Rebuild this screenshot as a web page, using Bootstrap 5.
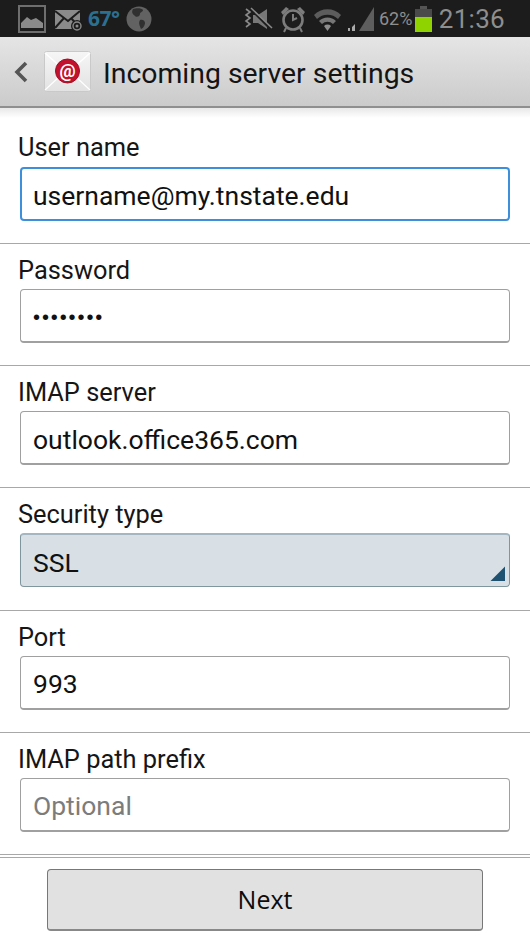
<!DOCTYPE html>
<html lang="en">
<head>
    <meta charset="utf-8" />
    <meta name="viewport" content="width=device-width, initial-scale=1" />
    <title>Incoming server settings</title>
    <link href="https://cdn.jsdelivr.net/npm/bootstrap@5.3.0/dist/css/bootstrap.min.css" rel="stylesheet">
    <style>
        body {
            background-color: #fff;
            font-family: Roboto, "Liberation Sans", sans-serif;
            color: #111;
            width: 530px;
            height: 942px;
            overflow: hidden;
        }

        /* Status bar */
        .status-bar {
            height: 37px;
            background-color: #1c1c1c;
            padding-left: 18px;
            padding-right: 25px;
        }
        .status-bar svg { display: block; flex: none; }
        .temp-text {
            color: #2b7091;
            font-size: 21px;
            font-weight: 700;
            letter-spacing: -0.5px;
            font-family: "Open Sans", sans-serif;
            line-height: 1;
            width: 30px;
            white-space: nowrap;
            margin-left: 4px;
        }
        .batt-text { color: #8e8e8e; font-size: 18px; line-height: 1; margin-left: 4px; width: 32px; }
        .clock-text { color: #8e8e8e; font-size: 26px; line-height: 1; letter-spacing: .3px; }
        .gap-mail { margin-left: 8px; }
        .gap-globe { margin-left: 8px; }
        .gap-mute { margin-left: 91px; }
        .gap-alarm { margin-left: 6px; }
        .gap-wifi { margin-left: 7px; }
        .gap-signal { margin-left: 5px; }
        .gap-batt { margin-left: 4px; }

        /* Action bar */
        .action-bar {
            height: 71px;
            background: linear-gradient(#e5e5e5, #cbcbcb);
            border-bottom: 2px solid #8f8f8f;
            padding-left: 13px;
        }
        .action-logo { margin-left: 16px; flex: none; }
        .action-title { font-size: 28.4px; line-height: 1; margin-left: 12px; margin-top: 6px; color: #141414; }
        .bar-shadow { height: 10px; background: linear-gradient(#e8e8e8, #fff); }

        /* Form rows */
        .field-list { margin-top: -10px; }
        .field-row {
            height: 122.2px;
            padding: 14px 20px 0 18px;
            border-bottom: 1px solid #a8a8a8;
        }
        .field-row.first-row { height: 136px; padding-top: 27px; }
        .field-label { font-size: 25.4px; line-height: 24px; height: 24px; margin-bottom: 7px; display: block; color: #161616; }
        .first-row .field-label { margin-bottom: 8px; }
        .phone-input.form-control {
            height: 54px;
            margin-left: 2px;
            width: 490px;
            border: 1px solid #a0a0a0;
            border-bottom-width: 2px;
            border-radius: 4px;
            font-size: 26.5px;
            padding: 3px 12px 0;
            color: #111;
            box-shadow: none;
            font-family: inherit;
        }
        .phone-input.form-control::placeholder { color: #7c7c7c; opacity: 1; }
        .phone-input.is-focus { border: 2px solid #3d8fdc; padding-left: 11px; }
        .dots-input.form-control { font-size: 20px; letter-spacing: 1.9px; font-family: "Liberation Sans", sans-serif; }
        .spinner-box {
            height: 54px;
            width: 490px;
            margin-left: 2px;
            background-color: #d8e0e6;
            border: 1px solid #7f969f;
            border-top: 2px solid #a3b6c2;
            border-radius: 4px;
            font-size: 26.5px;
            padding: 3px 12px 0;
            position: relative;
        }
        .spinner-corner {
            position: absolute;
            right: 4px;
            bottom: 5px;
            width: 15px;
            height: 15px;
            background-color: #1f5270;
            clip-path: polygon(100% 0, 100% 100%, 0 100%);
        }

        /* Bottom button */
        .bottom-bar { border-top: 1px solid #a8a8a8; margin-top: 2px; padding-top: 11px; }
        .next-btn.btn {
            width: 436px;
            height: 62px;
            background-color: #e1e1e1;
            border: 1px solid #777;
            border-bottom: 2px solid #888;
            border-radius: 4px;
            font-size: 25px;
            color: #0c0c0c;
            padding: 0;
            font-family: "Open Sans", sans-serif;
        }
    </style>
</head>
<body>
    <!-- Status bar -->
    <div class="status-bar d-flex align-items-center">
        <svg width="28" height="28" viewBox="0 0 28 28"><rect x="1" y="1" width="26" height="26" fill="none" stroke="#6e6e6e" stroke-width="2"/><path d="M3 23V18L9 12L13 15L18 13L25 18V23Z" fill="#8a8a8a"/></svg>
        <svg class="gap-mail" width="30" height="26" viewBox="0 0 30 26"><rect x="1" y="4" width="25" height="19" fill="#8a8a8a"/><path d="M1 5L14 15L26 5M1 22L10 12M26 22L17 12" stroke="#1c1c1c" stroke-width="2" fill="none"/><circle cx="23" cy="20" r="6" fill="#1c1c1c"/><circle cx="23" cy="20" r="4" fill="none" stroke="#8a8a8a" stroke-width="1.4"/><circle cx="23" cy="20" r="1.5" fill="#8a8a8a"/></svg>
        <span class="temp-text">67°</span>
        <svg class="gap-globe" width="26" height="26" viewBox="0 0 26 26"><circle cx="13" cy="13" r="12.5" fill="#626262"/><path d="M7 3C10 2 16 2 17 4C17 6 14 6 14 8C14 10 11 12 9 10C7 8 5 7 7 3ZM14 14C17 13 19 15 19 17C19 20 16 23 15 23C14 20 12 17 14 14Z" fill="#303030"/></svg>
        <svg class="gap-mute" width="31" height="26" viewBox="0 0 31 26"><path d="M3 3L7 6L3 9L7 12L3 15L7 18L3 21" fill="none" stroke="#8a8a8a" stroke-width="1.6"/><path d="M10 9H15L24 3V23L15 17H10Z" fill="#777"/><path d="M7 2L29 24" stroke="#1c1c1c" stroke-width="3"/><path d="M8 2L29 22" stroke="#8a8a8a" stroke-width="1.5"/></svg>
        <svg class="gap-alarm" width="26" height="28" viewBox="0 0 26 28"><circle cx="13" cy="15" r="9.5" fill="none" stroke="#7c7c7c" stroke-width="2.6"/><path d="M13 9V15L17 13" fill="none" stroke="#7c7c7c" stroke-width="2"/><path d="M1 7L6 2L9 4L3 10ZM25 7L20 2L17 4L23 10Z" fill="#7c7c7c"/><path d="M6 23L4 27M20 23L22 27" stroke="#7c7c7c" stroke-width="2"/></svg>
        <svg class="gap-wifi" width="29" height="26" viewBox="0 0 29 26"><path d="M1 9A19 19 0 0 1 28 9L25 13A15 15 0 0 0 4 13Z" fill="#5c5c5c"/><path d="M6 15A12 12 0 0 1 23 15L20 18A8 8 0 0 0 9 18Z" fill="#777"/><path d="M11 20A5 5 0 0 1 18 20L14.5 25Z" fill="#8e8e8e"/></svg>
        <svg class="gap-signal" width="28" height="26" viewBox="0 0 28 26"><path d="M27 1V25H12Z" fill="#5e5e5e"/><path d="M1 25H3V22H1ZM5 25H8V18L5 21Z" fill="#aaa"/></svg>
        <span class="batt-text">62%</span>
        <svg class="gap-batt" width="17" height="26" viewBox="0 0 17 26"><rect x="5" y="0" width="7" height="3" fill="#555"/><rect x="0" y="3" width="17" height="23" fill="#4a4a4a"/><rect x="0" y="11" width="17" height="15" fill="#8fd400"/></svg>
        <span class="clock-text ms-auto">21:36</span>
    </div>

    <!-- Action bar -->
    <div class="action-bar d-flex align-items-center">
        <svg width="15" height="22" viewBox="0 0 15 22"><path d="M13 2L4 11L13 20" fill="none" stroke="#555" stroke-width="3.6"/></svg>
        <svg class="action-logo" width="47" height="41" viewBox="0 0 47 41">
            <defs><linearGradient id="envFill" x1="0" y1="0" x2="0" y2="1"><stop offset="0" stop-color="#f6f6f6"/><stop offset="1" stop-color="#e2e2e2"/></linearGradient></defs>
            <rect x="0.5" y="0.5" width="46" height="40" rx="2" fill="url(#envFill)" stroke="#c9c9c9"/>
            <path d="M1 2L23.5 22L46 2" fill="none" stroke="#ffffff" stroke-width="1.5"/>
            <path d="M1 39L16 25M46 39L31 25" stroke="#fff" stroke-width="1.2"/>
            <circle cx="23.5" cy="20" r="12" fill="#c2112c" stroke="#a50d24"/>
            <text x="23.5" y="26" text-anchor="middle" font-family="Roboto, sans-serif" font-size="18" font-weight="700" fill="#fff">@</text>
        </svg>
        <span class="action-title">Incoming server settings</span>
    </div>
    <div class="bar-shadow"></div>

    <!-- Fields -->
    <form class="field-list">
        <div class="field-row first-row">
            <label class="field-label" for="userName">User name</label>
            <input id="userName" class="form-control phone-input is-focus" type="text" value="username@my.tnstate.edu">
        </div>
        <div class="field-row">
            <label class="field-label" for="passWord">Password</label>
            <input id="passWord" class="form-control phone-input dots-input" type="password" value="12345678">
        </div>
        <div class="field-row">
            <label class="field-label" for="imapServer">IMAP server</label>
            <input id="imapServer" class="form-control phone-input" type="text" value="outlook.office365.com">
        </div>
        <div class="field-row">
            <span class="field-label">Security type</span>
            <div class="spinner-box d-flex align-items-center">SSL<span class="spinner-corner"></span></div>
        </div>
        <div class="field-row">
            <label class="field-label" for="portNum">Port</label>
            <input id="portNum" class="form-control phone-input" type="text" value="993">
        </div>
        <div class="field-row">
            <label class="field-label" for="pathPrefix">IMAP path prefix</label>
            <input id="pathPrefix" class="form-control phone-input" type="text" placeholder="Optional">
        </div>
    </form>

    <!-- Next -->
    <div class="bottom-bar text-center">
        <button class="btn next-btn" type="button">Next</button>
    </div>

    <script src="https://cdn.jsdelivr.net/npm/bootstrap@5.3.0/dist/js/bootstrap.bundle.min.js"></script>
</body>
</html>
